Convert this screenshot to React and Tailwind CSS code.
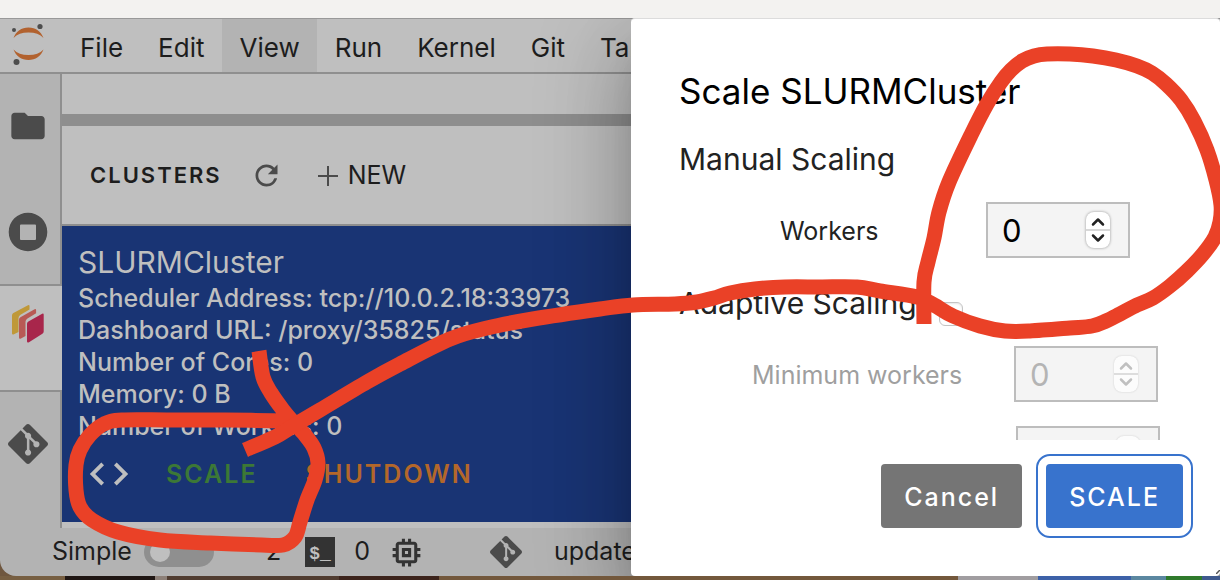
import React from "react";
import { SiGit } from "react-icons/si";
import { MdCode, MdFolder, MdMemory, MdRefresh } from "react-icons/md";

const MENUS = ["File", "Edit", "View", "Run", "Kernel", "Git", "Tabs"];

const CLUSTER_INFO = [
  "Scheduler Address: tcp://10.0.2.18:33973",
  "Dashboard URL: /proxy/35825/status",
  "Number of Cores: 0",
  "Memory: 0 B",
  "Number of Workers: 0",
];

// Smooth curve through a list of points (Catmull-Rom as cubic Béziers).
function curve(points) {
  let d = `M${points[0][0]} ${points[0][1]}`;
  for (let i = 0; i < points.length - 1; i++) {
    const p0 = points[i - 1] || points[i];
    const p1 = points[i];
    const p2 = points[i + 1];
    const p3 = points[i + 2] || p2;
    const c1 = [p1[0] + (p2[0] - p0[0]) / 6, p1[1] + (p2[1] - p0[1]) / 6];
    const c2 = [p2[0] - (p3[0] - p1[0]) / 6, p2[1] - (p3[1] - p1[1]) / 6];
    d += ` C${c1[0]} ${c1[1]} ${c2[0]} ${c2[1]} ${p2[0]} ${p2[1]}`;
  }
  return d;
}

const LOOP = [
  [259, 351], [263, 377], [271, 393], [283, 410], [293, 422], [305, 435], [314, 448],
  [318, 463], [315, 480], [307, 500], [300, 522], [295, 537], [283, 545], [262, 545],
  [210, 543], [160, 540], [118, 532], [92, 520], [80, 507], [76, 490], [76, 465],
  [80, 450], [90, 435], [104, 424], [122, 420], [170, 420], [225, 420], [290, 421],
];

const ARROW = [
  [245, 450], [275, 437], [293, 426], [320, 410], [367, 382], [400, 364], [450, 339],
  [487, 328], [533, 319], [600, 309], [633, 305], [675, 304], [697, 302], [714, 298],
  [730, 293], [755, 289], [785, 287], [820, 287], [857, 287], [880, 291], [917, 297],
  [934, 305], [953, 316], [980, 326], [1005, 331], [1030, 331], [1070, 328], [1092, 326],
  [1106, 321], [1120, 314], [1137, 305], [1153, 298], [1170, 286], [1187, 271],
  [1203, 254], [1215, 237], [1220, 222], [1221, 205], [1216, 180], [1207, 150],
  [1194, 121], [1181, 100], [1166, 84], [1152, 73], [1137, 66], [1116, 60], [1093, 56],
  [1070, 54], [1047, 54], [1034, 56], [1022, 61], [1011, 70], [1001, 82], [987, 104],
  [971, 135], [949, 182], [939, 212], [934, 238], [928, 262], [924, 282], [924, 324],
];

function Annotation() {
  return (
    <svg className="pointer-events-none absolute left-0 top-0 h-[580px] w-[1220px]" viewBox="0 0 1220 580" fill="none" stroke="#ea4127" strokeWidth="15" strokeLinejoin="round" aria-hidden="true">
      <path d={curve(LOOP)} />
      <path d={curve(ARROW)} />
    </svg>
  );
}

function JupyterLogo() {
  return (
    <svg className="h-[54px] w-[62px] shrink-0" viewBox="0 19 62 54" aria-label="Jupyter">
      <g fill="#b2622f">
        <path d="M13.5 38C16 31.500 21.500 27.500 28.500 27.500S41 31.500 43.500 38C40 34.300 35 32.500 28.500 32.500S17 34.300 13.500 38Z" />
        <path d="M13.500 49.500C16 56 21.500 60 28.500 60S41 56 43.500 49.500C40 53.200 35 55 28.500 55S17 53.200 13.500 49.500Z" />
      </g>
      <g fill="#4d4d4d">
        <circle cx="14" cy="30" r="2" />
        <circle cx="40" cy="26.500" r="2.600" />
        <circle cx="16.500" cy="62" r="3" />
      </g>
    </svg>
  );
}

function StopCircle() {
  return (
    <svg className="size-10" viewBox="0 0 40 40" aria-hidden="true">
      <path fill="#4b4b4b" fillRule="evenodd" d="M20 .7a19.300 19.300 0 1 0 0 38.600a19.300 19.300 0 0 0 0-38.600ZM13 12.500h14a1 1 0 0 1 1 1v13.500a1 1 0 0 1-1 1H13a1 1 0 0 1-1-1V13.500a1 1 0 0 1 1-1Z" />
    </svg>
  );
}

function DaskLogo() {
  return (
    <svg className="h-10 w-9" viewBox="10 304 36 40" aria-hidden="true">
      <path fill="#bf9838" d="M12 315.500q0-1.600 1.400-2.400L28 305.200q1.500-.7 1.500 1v3.300l-9 5.300q-2 1.200-2 3.200v14L14 334.200q-2 1-2-1Z" />
      <path fill="#b85a55" d="M19 319.700q0-1.600 1.400-2.400L34.600 309.300q1.500-.7 1.500 1v3l-8.600 5.200q-2 1.200-2 3.200v14.300L21 338.400q-2 1-2-1Z" />
      <path fill="#a8264b" d="M27 323.800q0-1.600 1.400-2.400L42.200 313.700q1.500-.7 1.500 1v16.800q0 1.500-1.300 2.200L29 342.200q-2 1-2-1Z" />
    </svg>
  );
}

function SideButton({ label, className, children }) {
  return (
    <button type="button" aria-label={label} className={`flex w-full items-center justify-center pr-1 ${className}`}>
      {children}
    </button>
  );
}

function NumberBox({ id, label, disabled }) {
  return (
    <div className="flex h-14 w-36 shrink-0 items-center border-2 border-[#bdbdbd] bg-[#f4f4f4] pl-3.5 pr-[18px]">
      <input
        id={id}
        type="number"
        aria-label={label}
        defaultValue="0"
        disabled={disabled}
        className="w-0 min-w-0 flex-1 appearance-none bg-transparent pt-0.5 text-[31px] leading-10 text-black outline-none [appearance:textfield] disabled:text-[#b4b4b4] [&::-webkit-inner-spin-button]:appearance-none"
      />
      <svg className={`h-9 w-6 shrink-0 rounded-lg bg-white ${disabled ? "text-[#b4b4b4] opacity-80 shadow-[0_0_2px_rgba(0,0,0,0.2)]" : "text-[#222] shadow-[0_0_3px_rgba(0,0,0,0.4)]"}`} viewBox="0 0 24 36" fill="none" aria-hidden="true">
        <path d="M0 18h24" stroke="#d8d8d8" strokeWidth="2" />
        <path d="M7 12.500l5-5 5 5M7 23.500l5 5 5-5" stroke="currentColor" strokeWidth="2.500" strokeLinecap="round" strokeLinejoin="round" />
      </svg>
    </div>
  );
}

function ScaleDialog() {
  return (
    <section role="dialog" aria-labelledby="dialog-title" className="absolute inset-y-0 left-[631px] right-0 flex flex-col rounded-sm border-t border-[#dcdcdc] bg-white text-[#222] shadow-[0_22px_30px_-14px_rgba(0,0,0,0.2),0_48px_76px_6px_rgba(0,0,0,0.16),0_18px_92px_16px_rgba(0,0,0,0.14)]">
      <div className="min-h-0 flex-1 overflow-hidden pl-12 pt-12">
        <h2 id="dialog-title" className="text-[35px] leading-12 text-black">Scale SLURMCluster</h2>
        <h3 className="mt-5 text-3xl leading-12">Manual Scaling</h3>
        <div className="mt-[19px] flex items-center">
          <label htmlFor="workers" className="w-[307px] pl-[101px] pt-1 text-[25px]">Workers</label>
          <NumberBox id="workers" />
        </div>
        <div className="mt-5 flex">
          <label htmlFor="adaptive" className="pt-px text-3xl leading-12">Adaptive Scaling</label>
          <input id="adaptive" type="checkbox" className="ml-[22px] mt-6 size-6 appearance-none rounded-md border border-[#c4c4c4] bg-white shadow-[inset_0_1px_2px_rgba(0,0,0,0.1)]" />
        </div>
        <div className="mt-[19px] flex items-center">
          <label htmlFor="minimum" className="w-[335px] pl-[73px] pt-1 text-[25px] text-[#9f9f9f]">Minimum workers</label>
          <NumberBox id="minimum" disabled />
        </div>
        <div className="mt-6 flex pl-[337px]">
          <NumberBox id="maximum" label="Maximum workers" disabled />
        </div>
      </div>
      <div className="flex h-[136px] shrink-0 items-start justify-end gap-6 pr-[37px] pt-6">
        <button type="button" className="h-16 rounded-sm bg-[#757575] px-[23px] pt-1 text-[25px] font-medium tracking-[2px] text-white">Cancel</button>
        <button type="button" className="h-16 rounded-sm bg-[#3873cd] px-[23px] pt-1 text-[25px] font-medium tracking-[2px] text-white outline-2 outline-offset-8 outline-[#3873cd]">SCALE</button>
      </div>
      <svg className="absolute bottom-0.5 right-0 h-1 w-1" viewBox="0 0 4 4" aria-hidden="true">
        <path d="M0 4L4 0" stroke="#555" strokeWidth="1.500" />
      </svg>
    </section>
  );
}

export default function App() {
  return (
    <div className="relative flex h-screen flex-col overflow-hidden bg-[#6f573f] font-[Inter,sans-serif] text-[25px] text-[#1d1d1d]">
      <div className="h-[18px] shrink-0 bg-[#f3f2f0]" />
      <main className="relative flex min-h-0 flex-1 flex-col overflow-hidden rounded-bl-2xl bg-[#b3b3b3]">
        <nav className="flex h-14 shrink-0 gap-px border-b-2 border-t border-b-[#8f8f8f] border-t-[#999] bg-[#bfbfbf] text-[26px]">
          <JupyterLogo />
          {MENUS.map((name) => (
            <button key={name} type="button" className={`px-[17px] pt-1 ${name === "View" ? "bg-[#b3b3b3]" : ""}`}>
              {name}
            </button>
          ))}
        </nav>

        <div className="flex min-h-0 flex-1">
          <aside className="flex w-[62px] shrink-0 flex-col text-[#4b4b4b]">
            <SideButton label="File Browser" className="h-[105px] border-r-2 border-[#8f8f8f] pb-0.5">
              <MdFolder size={40} />
            </SideButton>
            <SideButton label="Running" className="h-[105px] border-r-2 border-[#8f8f8f]">
              <StopCircle />
            </SideButton>
            <SideButton label="Dask" className="h-[108px] border-y-2 border-[#8f8f8f] bg-[#bfbfbf] pb-7 pr-1.5">
              <DaskLogo />
            </SideButton>
            <SideButton label="Git" className="h-[104px] grow-0 border-r-2 border-[#8f8f8f]">
              <SiGit size={40} />
            </SideButton>
            <div className="flex-1 border-r-2 border-[#8f8f8f]" />
          </aside>

          <div className="flex min-w-0 flex-1 flex-col bg-[#bfbfbf]">
            <div className="h-[52px] shrink-0 border-b-12 border-[#8e8e8e]" />
            <header className="flex h-[100px] shrink-0 items-center border-b-2 border-[#8e8e8e] pl-7">
              <h2 className="text-[22px] font-semibold tracking-[2px]">CLUSTERS</h2>
              <button type="button" aria-label="Refresh" className="ml-7 text-[#4b4b4b]">
                <MdRefresh size={33} />
              </button>
              <button type="button" className="ml-[35px] flex items-center gap-2.5 pt-0.5">
                <svg className="size-5" viewBox="0 0 20 20" aria-hidden="true">
                  <path d="M10 0v20M0 10h20" stroke="#4b4b4b" strokeWidth="2" />
                </svg>
                NEW
              </button>
            </header>
            <article className="flex-1 bg-[#193474] pl-4 pt-4 text-[#bfbfbf]">
              <h3 className="text-3xl leading-10">SLURMCluster</h3>
              {CLUSTER_INFO.map((line) => (
                <p key={line} className="font-medium leading-8">{line}</p>
              ))}
              <div className="flex h-16 items-center pl-2 font-semibold tracking-[2px]">
                <button type="button" aria-label="Insert code">
                  <MdCode size={46} />
                </button>
                <button type="button" className="ml-[34px] pt-0.5 text-[#3c7836]">SCALE</button>
                <button type="button" className="ml-12 pt-0.5 text-[#b3672a]">SHUTDOWN</button>
              </div>
            </article>
            <div className="h-1.5 shrink-0" />
          </div>
        </div>

        <footer className="flex h-12 shrink-0 items-center whitespace-nowrap pl-[52px]">
          <label htmlFor="simple">Simple</label>
          <input id="simple" type="checkbox" role="switch" className="ml-3 h-[30px] w-[70px] appearance-none rounded-full bg-[#8f8f8f] before:ml-1.5 before:mt-[5px] before:block before:size-5 before:rounded-full before:bg-[#bfbfbf]" />
          <span className="ml-[52px]">2</span>
          <span className="ml-6 flex size-[30px] items-center bg-[#333] pl-1 pt-1 font-[Liberation_Mono,monospace] text-lg font-bold text-[#bfbfbf]">$_</span>
          <span className="ml-[19px]">0</span>
          <MdMemory className="ml-[18px] text-[#333]" size={37} />
          <SiGit className="ml-[65px] text-[#4b4b4b]" size={32} />
          <span className="ml-8">updated</span>
        </footer>

        <ScaleDialog />
      </main>
      <div className="flex h-1 shrink-0">
        <div className="w-[65px] bg-[#775f42]" />
        <div className="w-[90px] bg-[#1f1613]" />
        <div className="w-3 bg-[#8d8078]" />
        <div className="w-[172px] bg-[#513d31]" />
        <div className="w-[100px] bg-[#3d241c]" />
        <div className="flex-1 bg-[#73583c]" />
        <div className="w-20 bg-[#a09da0]" />
        <div className="w-[93px] bg-[#3d61a8]" />
        <div className="w-[35px] bg-[#5b87a0]" />
        <div className="w-[36px] bg-[#2f7a2c]" />
        <div className="w-[18px] bg-[#3f5a8e]" />
      </div>
      <Annotation />
    </div>
  );
}
